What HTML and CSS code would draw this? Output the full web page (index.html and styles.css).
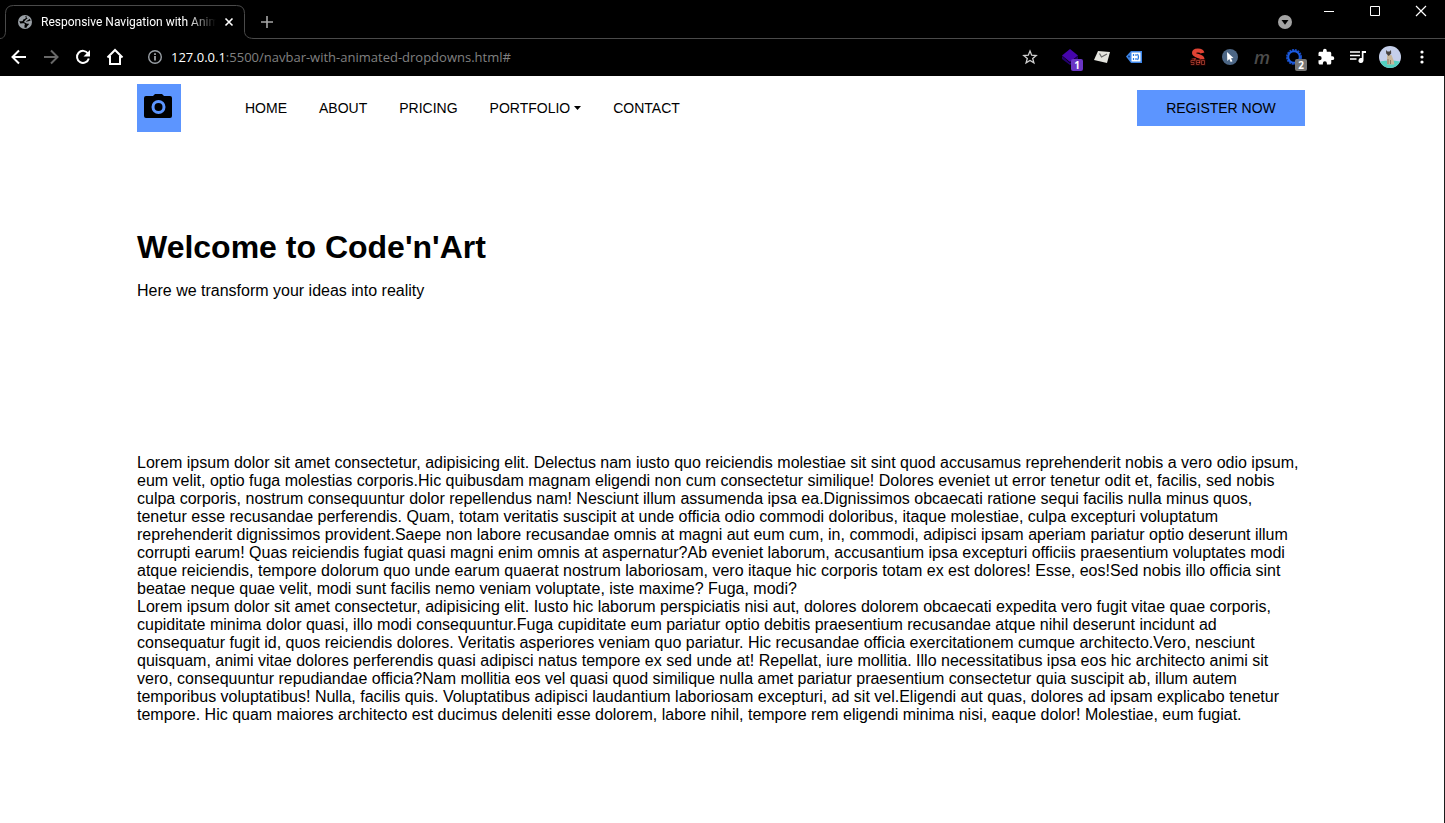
FILE: index.html
```html
<!DOCTYPE html>
<html lang="en">
<head>
<meta charset="utf-8">
<title>Responsive Navigation with Animated Dropdowns</title>
<link rel="stylesheet" href="styles.css">
</head>
<body>
<div class="window">
  <header class="browser">
    <div class="tab-strip">
      <div class="tab">
        <svg class="tab-outline" width="254" height="34" viewBox="0 0 254 34" fill="none" stroke="#4a4a4a"><path d="M0 33.5C4 33.5 5.500 30 5.500 26V8.500Q5.500 .5 13.500 .5H236.500Q244.500 .5 244.500 8.500V26C244.500 30 247 33.500 254 33.500"/></svg>
        <svg width="16" height="16" viewBox="0 0 16 16"><circle cx="8" cy="8" r="7" fill="#9aa0a6"/><path d="M7.500 2.200C10 3 8.500 5 7 5.200S6.500 7 5 7.200H2.300L3.300 9.500 6 9.300C8.500 9.300 8 11 7.500 11.200V13.800L9.500 13.700C9.700 11.500 12 11.500 12 9.500L9.500 9.200C8.500 8 10 7 11.500 7.200L13.700 6.500 12 4 9 2.300z" fill="#000"/><path d="M9.800 2.800L12 4.500 9.500 6 8 7.800 10 8.800H13" fill="none" stroke="#9aa0a6" stroke-width="1.500"/></svg>
        <span class="tab-title">Responsive Navigation with Anim</span>
        <button class="tab-close" aria-label="Close tab"><svg width="10" height="10" viewBox="0 0 10 10" stroke="#fff" stroke-width="1.600"><path d="M1.500 1.500l7 7M8.500 1.500l-7 7"/></svg></button>
      </div>
      <div class="strip-rest">
        <button class="new-tab" aria-label="New tab"><svg width="14" height="14" viewBox="0 0 14 14" stroke="#a6a6a6" stroke-width="1.600"><path d="M7 1v12M1 7h12"/></svg></button>
        <div class="window-controls">
          <button class="search-tabs" aria-label="Search tabs"><svg width="14" height="14" viewBox="0 0 14 14"><circle cx="7" cy="7" r="7" fill="#a3a3a3"/><path d="M3.500 5h7L7 9.700z" fill="#000"/></svg></button>
          <button class="control" aria-label="Minimize"><svg width="12" height="12" viewBox="0 0 12 12" stroke="#fff"><path d="M1 6.500h10"/></svg></button>
          <button class="control" aria-label="Maximize"><svg width="12" height="12" viewBox="0 0 12 12" fill="none" stroke="#fff"><path d="M1.500 1.500h9v9h-9z"/></svg></button>
          <button class="control" aria-label="Close"><svg width="12" height="12" viewBox="0 0 12 12" stroke="#fff" stroke-width="1.200"><path d="M1 1l10 10M11 1L1 11"/></svg></button>
        </div>
      </div>
    </div>
    <div class="toolbar">
      <button class="tool" aria-label="Back"><svg width="16" height="16" viewBox="0 0 16 16" fill="none" stroke="#fff" stroke-width="2"><path d="M15 8H2M8 1.500L1.500 8 8 14.500"/></svg></button>
      <button class="tool" aria-label="Forward"><svg width="16" height="16" viewBox="0 0 16 16" fill="none" stroke="#686868" stroke-width="2"><path d="M1 8h13M8 1.500L14.500 8 8 14.500"/></svg></button>
      <button class="tool" aria-label="Reload"><svg width="16" height="16" viewBox="0 0 16 16"><path d="M13 4.500A6 6 0 1 0 13.800 9.500" fill="none" stroke="#fff" stroke-width="2"/><path d="M15 1v6.500H8.500z" fill="#fff"/></svg></button>
      <button class="tool" aria-label="Home"><svg width="18" height="18" viewBox="0 0 18 18" fill="none" stroke="#fff" stroke-width="2"><path d="M1.500 9.500L9 2l7.500 7.500M4 8v8h10V8"/></svg></button>
      <div class="address">
        <svg width="16" height="16" viewBox="0 0 16 16"><circle cx="8" cy="8" r="6.300" fill="none" stroke="#9aa0a6" stroke-width="1.400"/><path d="M7.200 7h1.600v4.500H7.200zM7.200 4.300h1.600v1.600H7.200z" fill="#b5b8bc"/></svg>
        <span class="url"><span class="host">127.0.0.1</span>:5500/navbar-with-animated-dropdowns.html#</span>
      </div>
      <button class="tool" aria-label="Bookmark"><svg width="16" height="16" viewBox="0 0 16 16" fill="none" stroke="#d0d0d0" stroke-width="1.300"><path d="M8 2l1.700 4.200 4.500.3-3.500 2.900 1.200 4.400L8 11.400l-3.900 2.400 1.200-4.400L1.800 6.500l4.500-.3z"/></svg></button>
      <div class="extensions">
        <button class="tool" aria-label="Extension, 1 item"><svg width="18" height="18" viewBox="0 0 18 18"><path d="M1 8L9 15l8-7v3l-8 6-8-6z" fill="#23006e"/><path d="M9 1l8 6.500L9 14 1 7.500z" fill="#4605ae"/></svg><span class="badge badge-purple">1</span></button>
        <button class="tool" aria-label="Mail extension"><svg width="16" height="16" viewBox="0 0 16 16"><path d="M4 2l12 1-3 11L0 11z" fill="#e4e4de"/><path d="M5.500 4.500L7.500 8l5.500-3" fill="none" stroke="#666" stroke-width="1.200"/></svg></button>
        <button class="tool" aria-label="Tag extension"><svg width="18" height="16" viewBox="0 0 18 16"><path d="M1 7.500L6 2h11v12H6z" fill="#3c85e8"/><circle cx="4" cy="7.500" r="1" fill="#123d80"/><path d="M6.500 3.500h9v9h-9z" fill="#fff"/><path d="M8.500 5v2M8.500 9v2M11 5v2M11 9v2M12.500 5q2 3 0 6" fill="none" stroke="#2777e0" stroke-width="1.200"/></svg></button>
        <span class="tool"></span>
        <button class="tool" aria-label="SEO extension"><svg width="16" height="18" viewBox="0 0 16 18" fill="none"><path d="M12.500 5C11.500 1.500 4 1.500 4 5S12.500 7.500 12.500 11 4 15 3.500 10.500" stroke="#e14334" stroke-width="4"/><path d="M4.500 12.500H1v2h3v2H.8M9.500 12.500h-3v4h3M7 14.500h2M11.500 12.500h3v4h-3z" stroke="#200" stroke-width="2.400"/><path d="M4.500 12.500H1v2h3v2H.8M9.500 12.500h-3v4h3M7 14.500h2M11.500 12.500h3v4h-3z" stroke="#b94735" stroke-width=".7"/></svg></button>
        <button class="tool" aria-label="Pointer extension"><svg width="16" height="16" viewBox="0 0 16 16"><circle cx="8" cy="8" r="8" fill="#4c6685"/><path d="M5 3l6.500 6-2.500.3 1.500 3-1.800.8-1.400-3L5.300 12z" fill="#fff"/></svg></button>
        <button class="tool letter" aria-label="M extension">m</button>
        <button class="tool" aria-label="Extension, 2 items"><svg width="16" height="16" viewBox="0 0 16 16" fill="none"><circle cx="8" cy="8" r="7" stroke="#174bc0" stroke-width="2" stroke-dasharray="2 .8"/><circle cx="8" cy="8" r="5.800" stroke="#1b5be0" stroke-width="2"/></svg><span class="badge badge-grey">2</span></button>
        <button class="tool" aria-label="Extensions"><svg width="18" height="18" viewBox="0 0 24 24" fill="#fff"><path d="M20.500 11H19V7c0-1.100-.9-2-2-2h-4V3.500a2.500 2.500 0 0 0-5 0V5H4c-1.100 0-2 .9-2 2v3.800h1.500a2.700 2.700 0 0 1 0 5.400H2V20c0 1.100.9 2 2 2h3.800v-1.500a2.700 2.700 0 0 1 5.400 0V22H17c1.100 0 2-.9 2-2v-4h1.500a2.500 2.500 0 0 0 0-5z"/></svg></button>
        <button class="tool" aria-label="Media"><svg width="16" height="16" viewBox="0 0 16 16"><path d="M0 3h10M0 6.500h10M0 10h6.500" stroke="#fff" stroke-width="1.600"/><path d="M16 2v2h-2.500v7.500a2.500 2.500 0 1 1-1.700-2.400V2z" fill="#fff"/></svg></button>
        <button class="tool" aria-label="Profile"><svg width="22" height="22" viewBox="0 0 22 22"><circle cx="11" cy="11" r="11" fill="#c5cfea"/><path d="M1 15.500q10-2 20 0A11 11 0 0 1 1 15.500z" fill="#52cfc0"/><path d="M8 9h4.500l2 5 1 4.500H8z" fill="#c8b79b"/><path d="M7 4l1.500 1.500h2L12 4l.2 3.500L9.700 10 7.200 7.500z" fill="#46403d"/><path d="M9 13v5M11.500 14v4" stroke="#8a7866"/></svg></button>
        <button class="tool" aria-label="Menu"><svg width="16" height="16" viewBox="0 0 16 16" fill="#fff"><circle cx="8" cy="3" r="1.600"/><circle cx="8" cy="8" r="1.600"/><circle cx="8" cy="13" r="1.600"/></svg></button>
      </div>
    </div>
  </header>
  <div class="page">
    <nav class="navbar container">
      <a class="logo" href="#" aria-label="Home page"><svg width="30" height="26" viewBox="0 0 30 26"><path d="M9 3L11 1h7l2 2h6q2 0 2 2v18q0 2-2 2H2q-2 0-2-2V5q0-2 2-2z" fill="#000"/><circle cx="14.500" cy="14" r="5.500" fill="#000" stroke="#5c95ff" stroke-width="3"/></svg></a>
      <ul class="menu">
        <li><a href="#">HOME</a></li>
        <li><a href="#">ABOUT</a></li>
        <li><a href="#">PRICING</a></li>
        <li><a href="#">PORTFOLIO<svg class="caret" width="7" height="4" viewBox="0 0 7 4"><path d="M0 0h7L3.500 4z"/></svg></a></li>
        <li><a href="#">CONTACT</a></li>
      </ul>
      <button class="register">REGISTER NOW</button>
    </nav>
    <main class="container">
      <section class="hero">
        <h1>Welcome to Code'n'Art</h1>
        <p>Here we transform your ideas into reality</p>
      </section>
      <section class="copy">
        <p>Lorem ipsum dolor sit amet consectetur, adipisicing elit. Delectus nam iusto quo reiciendis molestiae sit sint quod accusamus reprehenderit nobis a vero odio ipsum, eum velit, optio fuga molestias corporis.Hic quibusdam magnam eligendi non cum consectetur similique! Dolores eveniet ut error tenetur odit et, facilis, sed nobis culpa corporis, nostrum consequuntur dolor repellendus nam! Nesciunt illum assumenda ipsa ea.Dignissimos obcaecati ratione sequi facilis nulla minus quos, tenetur esse recusandae perferendis. Quam, totam veritatis suscipit at unde officia odio commodi doloribus, itaque molestiae, culpa excepturi voluptatum reprehenderit dignissimos provident.Saepe non labore recusandae omnis at magni aut eum cum, in, commodi, adipisci ipsam aperiam pariatur optio deserunt illum corrupti earum! Quas reiciendis fugiat quasi magni enim omnis at aspernatur?Ab eveniet laborum, accusantium ipsa excepturi officiis praesentium voluptates modi atque reiciendis, tempore dolorum quo unde earum quaerat nostrum laboriosam, vero itaque hic corporis totam ex est dolores! Esse, eos!Sed nobis illo officia sint beatae neque quae velit, modi sunt facilis nemo veniam voluptate, iste maxime? Fuga, modi?</p>
        <p>Lorem ipsum dolor sit amet consectetur, adipisicing elit. Iusto hic laborum perspiciatis nisi aut, dolores dolorem obcaecati expedita vero fugit vitae quae corporis, cupiditate minima dolor quasi, illo modi consequuntur.Fuga cupiditate eum pariatur optio debitis praesentium recusandae atque nihil deserunt incidunt ad consequatur fugit id, quos reiciendis dolores. Veritatis asperiores veniam quo pariatur. Hic recusandae officia exercitationem cumque architecto.Vero, nesciunt quisquam, animi vitae dolores perferendis quasi adipisci natus tempore ex sed unde at! Repellat, iure mollitia. Illo necessitatibus ipsa eos hic architecto animi sit vero, consequuntur repudiandae officia?Nam mollitia eos vel quasi quod similique nulla amet pariatur praesentium consectetur quia suscipit ab, illum autem temporibus voluptatibus! Nulla, facilis quis. Voluptatibus adipisci laudantium laboriosam excepturi, ad sit vel.Eligendi aut quas, dolores ad ipsam explicabo tenetur tempore. Hic quam maiores architecto est ducimus deleniti esse dolorem, labore nihil, tempore rem eligendi minima nisi, eaque dolor! Molestiae, eum fugiat.</p>
      </section>
    </main>
  </div>
</div>
</body>
</html>
```
FILE: styles.css
```css
* { box-sizing: border-box; margin: 0; padding: 0; }
body { font: 16px/18px "Liberation Sans", Arial, sans-serif; color: #000; background: #fff; }
button { border: 0; background: none; color: inherit; font: inherit; cursor: pointer; }
svg { display: block; flex: none; }
a { color: inherit; text-decoration: none; }

.window { display: flex; flex-direction: column; min-height: 100vh; }

.browser { background: #000; color: #fff; font-family: "Open Sans", "Noto Sans", sans-serif; }
.tab-strip { display: flex; height: 39px; }
.tab { position: relative; display: flex; align-items: center; gap: 8px; width: 250px; padding: 5px 16px 0 17px; }
.tab-outline { position: absolute; left: 0; bottom: 0; }
.tab-title {
  flex: 1; overflow: hidden; white-space: nowrap; font-family: Roboto, sans-serif; font-size: 12px; line-height: 18px;
  -webkit-mask-image: linear-gradient(to right, #000 84%, transparent);
  mask-image: linear-gradient(to right, #000 84%, transparent);
}
.tab-close { display: flex; }
.strip-rest { flex: 1; display: flex; justify-content: space-between; margin-left: 4px; border-bottom: 1px solid #4a4a4a; }
.new-tab { display: flex; align-items: center; padding: 6px 6px 0; }
.window-controls { display: flex; align-items: flex-start; padding-right: 1px; }
.search-tabs { display: flex; padding: 15px 14px 0 0; }
.control { display: flex; justify-content: center; width: 46px; padding-top: 5px; }

.toolbar { display: flex; align-items: center; height: 37px; padding: 0 7px 1px 3px; }
.tool { position: relative; display: flex; align-items: center; justify-content: center; width: 32px; height: 32px; }
.address { flex: 1; display: flex; align-items: center; gap: 8px; margin-left: 16px; font-size: 13px; }
.url { color: #808080; }
.host { color: #fff; }
.extensions { display: flex; margin-left: 8px; }
.letter { color: #4c4c4c; font-size: 18px; font-weight: 600; font-style: italic; }
.badge { position: absolute; right: 3px; bottom: 2px; width: 12px; height: 12px; border-radius: 2px; font: bold 10px/12px "Open Sans", sans-serif; text-align: center; color: #fff; }
.badge-purple { background: #6a35c4; }
.badge-grey { background: #757575; }

.page { flex: 1; padding-right: 2px; border-right: 1px solid #1c1c1c; }
.container { max-width: 1168px; margin: 0 auto; }
.navbar { display: flex; align-items: center; height: 64px; }
.logo { display: flex; justify-content: center; width: 44px; height: 48px; padding-top: 9px; background: #5c95ff; }
.menu { flex: 1; display: flex; gap: 32px; margin-left: 64px; list-style: none; font-size: 14px; }
.caret { display: inline-block; margin-left: 4px; vertical-align: 3px; }
.register { width: 168px; height: 36px; background: #5c95ff; font-size: 14px; }

.hero { padding: 89px 0 154px; }
.hero h1 { margin-bottom: 17px; font-size: 32px; line-height: 36px; }
.copy { padding-bottom: 64px; }
```
